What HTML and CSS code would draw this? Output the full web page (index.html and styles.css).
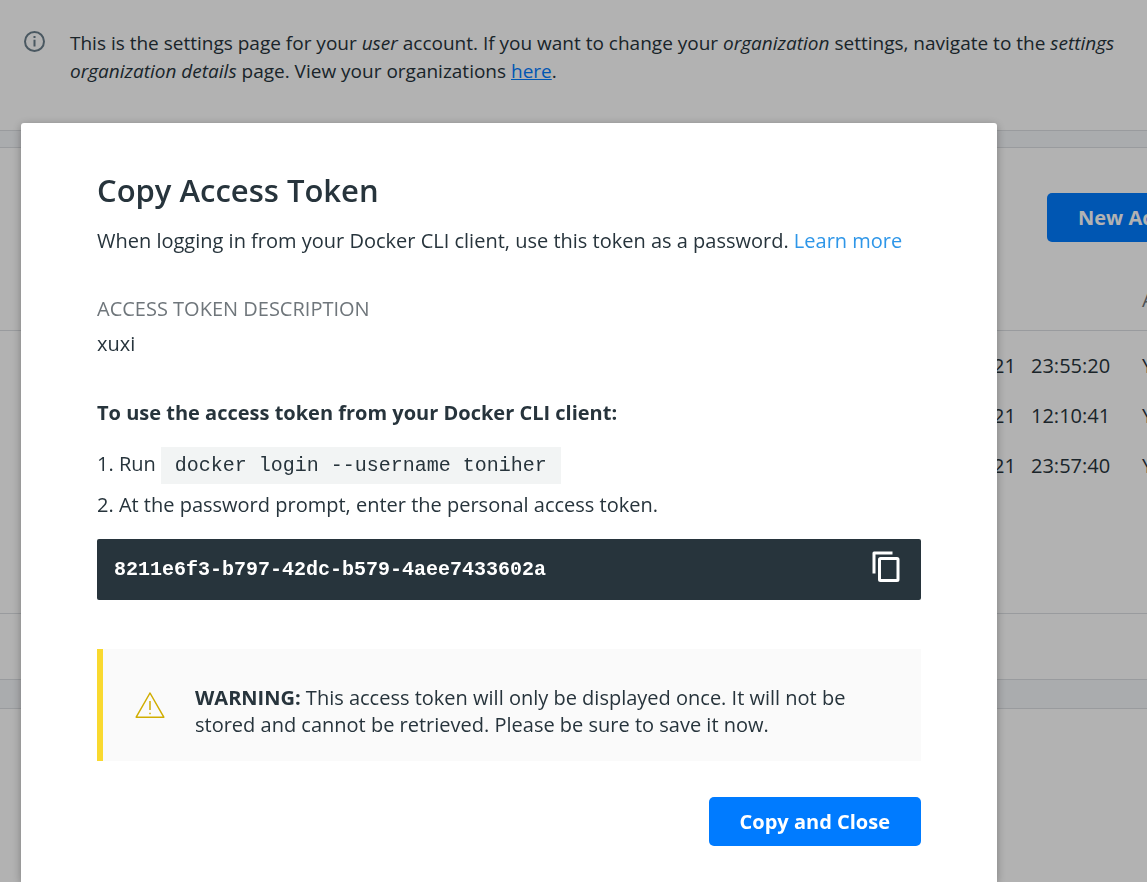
FILE: index.html
```html
<!DOCTYPE html>
<html lang="en">
<head>
<meta charset="utf-8">
<title>Copy Access Token</title>
<link rel="stylesheet" href="styles.css">
</head>
<body>
<main class="page">
  <section class="banner">
    <svg class="info-icon" viewBox="0 0 22 22" fill="none" stroke="#6b7f8c" stroke-width="2" aria-hidden="true">
      <circle cx="10.500" cy="10.500" r="9.500"/>
      <path d="M10.500 8.800v6.700M10.500 5.100v2"/>
    </svg>
    <p class="banner-text">This is the settings page for your <em>user</em> account. If you want to change your <em>organization</em> settings, navigate to the <em>settings</em><br><em>organization details</em> page. View your organizations <a class="banner-link" href="#">here</a>.</p>
  </section>
  <section class="panel">
    <div class="toolbar"><button class="button" type="button">New Access Token</button></div>
    <table class="tokens">
      <thead><tr><th class="date"></th><th class="time"></th><th class="active">ACTIVE</th></tr></thead>
      <tbody>
        <tr><td class="date">2021</td><td class="time">23:55:20</td><td class="active">Yes</td></tr>
        <tr><td class="date">2021</td><td class="time">12:10:41</td><td class="active">Yes</td></tr>
        <tr><td class="date">2021</td><td class="time">23:57:40</td><td class="active">Yes</td></tr>
      </tbody>
    </table>
    <div class="table-footer"></div>
  </section>
  <section class="panel panel-next"></section>
</main>
<div class="overlay">
  <div class="modal" role="dialog" aria-modal="true" aria-labelledby="modal-title">
    <h1 class="title" id="modal-title">Copy Access Token</h1>
    <p class="intro">When logging in from your Docker CLI client, use this token as a password. <a class="learn" href="#">Learn more</a></p>
    <h2 class="label">ACCESS TOKEN DESCRIPTION</h2>
    <p class="description">xuxi</p>
    <h2 class="steps-title">To use the access token from your Docker CLI client:</h2>
    <p class="step step-run">1. Run <code class="command">docker login --username toniher</code></p>
    <p class="step">2. At the password prompt, enter the personal access token.</p>
    <div class="token">
      <code class="token-value">8211e6f3-b797-42dc-b579-4aee7433602a</code>
      <button class="copy" type="button" aria-label="Copy token">
        <svg class="copy-icon" viewBox="0 0 28 32" fill="none" stroke="#fff" stroke-width="3" stroke-linejoin="round" aria-hidden="true">
          <path d="M20.500 2H2v20.500"/>
          <rect x="7.500" y="7.500" width="18.500" height="22" rx="1"/>
        </svg>
      </button>
    </div>
    <div class="warning">
      <svg class="warning-icon" viewBox="0 0 30 28" fill="none" stroke="#d0ad00" stroke-width="1.500" stroke-linejoin="round" aria-hidden="true">
        <path d="M15 1 1.200 25.200h27.600zM15 9v9M15 20.800v1.500"/>
      </svg>
      <p class="warning-text"><strong>WARNING:</strong> This access token will only be displayed once. It will not be stored and cannot be retrieved. Please be sure to save it now.</p>
    </div>
    <div class="actions"><button class="button" type="button">Copy and Close</button></div>
  </div>
</div>
</body>
</html>
```
FILE: styles.css
```css
* { box-sizing: border-box; }
body {
  margin: 0;
  height: 100vh;
  overflow: hidden;
  background: #fff;
  color: #27343c;
  font: 20px/28px "Open Sans", sans-serif;
}
h1, h2, p { margin: 0; }
.page {
  width: calc(100% + 160px);
  min-height: 100vh;
  display: flex;
  flex-direction: column;
  background: #f4f6f9;
}
.banner {
  display: flex;
  gap: 24px;
  padding: 29px 24px 45px;
  background: #fff;
  border-bottom: 1px solid #dcdfe3;
  font-size: 19px;
  white-space: nowrap;
}
.info-icon { width: 22px; height: 22px; margin-top: 2px; }
.banner-link { color: #007bff; }
.panel {
  margin-top: 16px;
  padding-top: 45px;
  background: #fff;
  border-top: 1px solid #dcdfe3;
  border-bottom: 1px solid #dcdfe3;
}
.panel-next { flex: 1; margin-top: 28px; border-bottom: 0; }
.toolbar { display: flex; justify-content: flex-end; padding: 0 15px; }
.button {
  height: 49px;
  padding: 0 31px;
  border: 0;
  border-radius: 5px;
  background: #007bff;
  color: #fff;
  font: 700 20px/28px "Open Sans", sans-serif;
}
.tokens {
  width: 100%;
  margin-top: 44px;
  border-collapse: collapse;
}
.tokens th {
  padding: 0 0 16px;
  border-bottom: 1px solid #dcdfe3;
  color: #6f767b;
  font-weight: 400;
  text-align: left;
}
.tokens td { padding: 11px 0; }
.tokens tbody tr:first-child td { padding-top: 21px; }
.tokens .date { text-align: right; }
.tokens .time { width: 126px; padding-left: 15px; }
.tokens .active { width: 165px; }
.table-footer { height: 66px; margin-top: 122px; border-top: 1px solid #dcdfe3; }
.overlay {
  position: fixed;
  inset: 0;
  display: flex;
  padding: 123px 150px 0 21px;
  background: rgba(0, 0, 0, 0.3);
}
.modal {
  flex: 1;
  padding: 45px 76px 36px;
  border-radius: 3px 3px 0 0;
  background: #fff;
  box-shadow: 0 2px 10px rgba(0, 0, 0, 0.3);
}
.title { font-size: 31px; line-height: 44px; font-weight: 600; }
.intro { margin-top: 15px; }
.learn { color: #2e96e8; text-decoration: none; }
.label { margin-top: 40px; color: #6f767b; font-size: 20px; font-weight: 400; }
.description { margin-top: 7px; }
.steps-title { margin-top: 41px; font-size: 20px; font-weight: 700; }
.step { margin-top: 7px; }
.step-run { display: flex; align-items: baseline; gap: 5px; height: 37px; margin-top: 20px; }
.command {
  padding: 5px 14px 4px;
  background: #f2f4f4;
  font: 20px/28px "Liberation Mono", monospace;
}
.token {
  display: flex;
  align-items: center;
  justify-content: space-between;
  height: 61px;
  margin-top: 20px;
  padding: 0 21px 0 17px;
  border-radius: 2px;
  background: #27343c;
  color: #fff;
}
.token-value { font: 700 20px/28px "Liberation Mono", monospace; }
.copy { padding: 0 0 5px; border: 0; background: none; }
.copy-icon { display: block; width: 28px; height: 32px; }
.warning {
  display: flex;
  align-items: center;
  gap: 30px;
  height: 112px;
  margin-top: 49px;
  padding: 12px 60px 0 32px;
  border-left: 6px solid #f9d92f;
  background: #fafafa;
}
.warning-icon { flex: none; width: 30px; height: 28px; margin-bottom: 10px; }
.warning-text { line-height: 27px; }
.actions { display: flex; justify-content: flex-end; margin-top: 36px; }
```
